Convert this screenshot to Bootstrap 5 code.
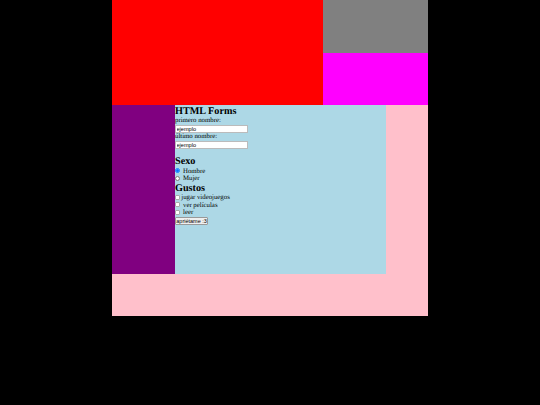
<!DOCTYPE html>
<html lang="es">
<head>
<meta charset="utf-8">
<title>HTML Forms</title>
<link href="https://cdn.jsdelivr.net/npm/bootstrap@5.3.0/dist/css/bootstrap.min.css" rel="stylesheet">
<style>
html, body { height: 100%; }
body { background: #000; font-family: "Liberation Serif", serif; font-size: 6.8px; line-height: normal; color: #000; text-rendering: geometricPrecision; }
.stage { width: 316px; height: 316px; background: #ffc0cb; margin-left: 112px; }
.top-row { height: 105.3px; }
.red-box { width: 211px; background: #f00; }
.side-stack { width: 105px; }
.gray-box { height: 52.65px; background: #808080; }
.magenta-box { height: 52.65px; background: #f0f; }
.mid-row { height: 168.7px; }
.purple-box { width: 63px; background: #800080; }
.blue-box { width: 211px; background: #add8e6; padding-top: .7px; }
.form-title { font-family: inherit; font-size: 10.2px; font-weight: 700; line-height: 11px; margin: 0; }
.sect-title { font-family: inherit; font-size: 10.2px; font-weight: 700; line-height: 12px; margin: 0; }
.sect-first { line-height: 11.4px; }
.sect-tight { line-height: 11.4px; }
.line { display: block; line-height: 7.6px; height: 7.6px; margin: 0; white-space: nowrap; }
.txt { display: block; width: 73px; height: 8.5px; padding: 0 .5px; font-family: "Liberation Sans", sans-serif; font-size: 5.6px; line-height: 6px; border: .5px solid #bbb; border-radius: 0; background: #fff; color: #000; outline: 0; }
.pick { width: 5px; height: 5px; margin: 0 1px 0 .3px; vertical-align: -0.5px; }
.tick { appearance: none; background: #fff; border: .5px solid #aaa; border-radius: 1px; }
.gap-line { height: 7px; }
.go-btn { display: block; height: 8px; width: 32.5px; margin: 0 0 0 .3px; padding: 0; font-family: "Liberation Sans", sans-serif; font-size: 5.5px; line-height: 6px; background: #efefef; border: .5px solid #999; border-radius: 1px; color: #000; white-space: nowrap; }
</style>
</head>
<body>
<div class="stage d-flex flex-column">
  <div class="top-row d-flex">
    <div class="red-box"></div>
    <div class="side-stack d-flex flex-column">
      <div class="gray-box"></div>
      <div class="magenta-box"></div>
    </div>
  </div>
  <div class="mid-row d-flex">
    <div class="purple-box"></div>
    <form class="blue-box">
      <h2 class="form-title">HTML Forms</h2>
      <label class="line" for="n1">primero nombre:</label>
      <input class="txt" id="n1" type="text" value="ejemplo">
      <label class="line" for="n2">último nombre:</label>
      <input class="txt" id="n2" type="text" value="ejemplo">
      <div class="gap-line"></div>
      <h3 class="sect-title sect-first">Sexo</h3>
      <label class="line"><input class="pick" type="radio" name="sexo" checked> Hombre</label>
      <label class="line"><input class="pick" type="radio" name="sexo"> Mujer</label>
      <h3 class="sect-title sect-tight">Gustos</h3>
      <label class="line"><input class="pick tick" type="checkbox">jugar videojuegos</label>
      <label class="line"><input class="pick tick" type="checkbox"> ver películas</label>
      <label class="line"><input class="pick tick" type="checkbox"> leer</label>
      <button class="go-btn" type="button">apriétame :3</button>
    </form>
  </div>
</div>
<script src="https://cdn.jsdelivr.net/npm/bootstrap@5.3.0/dist/js/bootstrap.bundle.min.js"></script>
</body>
</html>
